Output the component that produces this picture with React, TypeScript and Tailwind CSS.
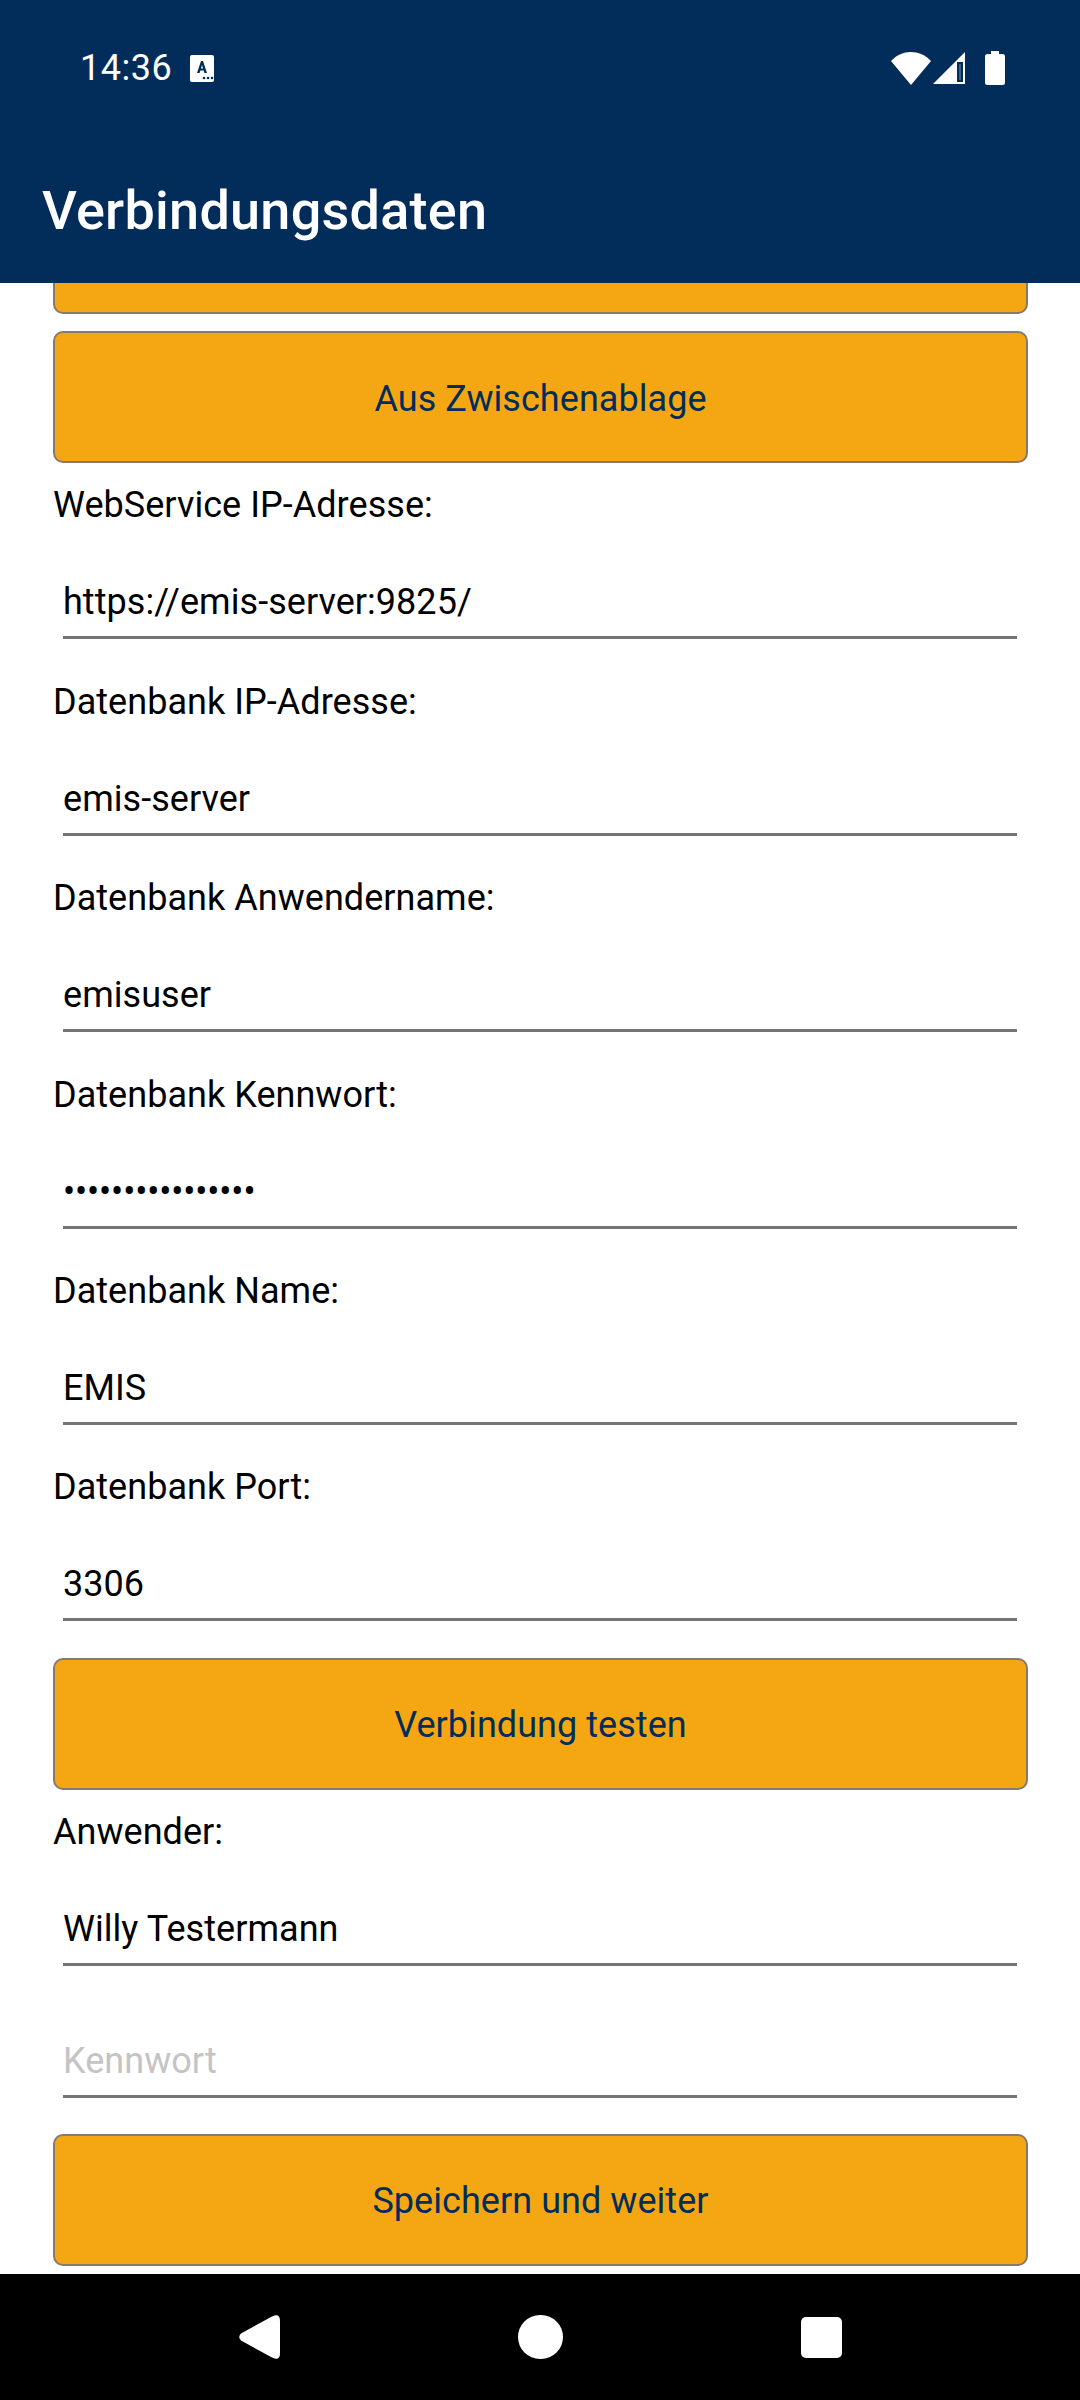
const Btn = ({ t }: { t: string }) => (
  <div className="h-[132px] shrink-0 ml-[53px] mr-[52px] rounded-[10px] border-2 border-[#857a6d] bg-[#f5a713] flex items-center justify-center pt-[3px] text-[36px] tracking-[0.05px] text-[#022d5b]">{t}</div>
);
const Field = ({ label, value, muted, dots }: { label?: string; value: string; muted?: boolean; dots?: boolean }) => (
  <div className="h-[196.4px] shrink-0 flex flex-col justify-end">
    {label && <div className="ml-[53px] h-[48px] leading-[48px] text-[36px] tracking-[0.04px] text-black mb-[37px]">{label}</div>}
    <div className={`mx-[63px] h-[73px] border-b-[3px] border-[#757575] pt-[4px] leading-[64px] text-[36px] ${muted ? "text-[#c4c4c4]" : "text-black"} ${dots ? "tracking-[-0.12px]" : "tracking-[0.04px]"}`}>{value}</div>
  </div>
);
export default function App() {
  return (
    <div className="w-[1080px] h-[2400px] bg-white flex flex-col overflow-hidden font-['Roboto',sans-serif]">
      <header className="h-[283px] shrink-0 bg-[#022d5b] text-white relative z-10">
        <div className="h-[135px] pl-[80px] pr-[75px] flex items-center pt-[1px]">
          <span className="text-[36px] tracking-[0.5px]">14:36</span>
          <svg className="ml-[18px]" width="24" height="27" viewBox="0 0 24 27">
            <rect width="24" height="27" rx="2" fill="#fff" />
            <path d="M7 18 L11 6 h2 L17 18 h-2.6 l-.8-2.6 h-3.2 L9.6 18Z M11 13.4 h2 L12 10Z" fill="#022d5b" fillRule="evenodd" />
            <circle cx="14" cy="23" r="1.3" fill="#022d5b" /><circle cx="18" cy="23" r="1.3" fill="#022d5b" /><circle cx="22" cy="23" r="1.3" fill="#022d5b" />
          </svg>
          <div className="ml-auto flex items-center">
            <svg width="40" height="33" viewBox="0 0 40 33"><path d="M0 9 C 11 -3 29 -3 40 9 L20 33Z" fill="#fff" /></svg>
            <svg className="ml-[2px]" width="33" height="33" viewBox="0 0 33 33"><path fillRule="evenodd" d="M0 32 L32 0 V32Z M24 10 L30 10 V30 H24Z" fill="#fff" /><rect x="26" y="12" width="2" height="16" fill="#fff" opacity="0.25" /></svg>
            <svg className="ml-[19px]" width="20" height="34" viewBox="0 0 20 34"><path d="M6 0 h8 v3 h3.5 a2.5 2.5 0 0 1 2.5 2.5 V31.5 a2.5 2.5 0 0 1 -2.5 2.5 H2.500 a2.500 2.500 0 0 1 -2.500 -2.500 V5.500 a2.500 2.500 0 0 1 2.500 -2.500 H6Z" fill="#fff" /></svg>
          </div>
        </div>
        <div className="pl-[42px] text-[54px] font-medium leading-[56px] mt-[48px] tracking-[0.25px]">Verbindungsdaten</div>
      </header>
      <main className="flex-1 min-h-0 overflow-hidden flex flex-col">
        <div className="-mt-[101px] flex flex-col">
          <Btn t="" />
          <div className="h-[17px] shrink-0" />
          <Btn t="Aus Zwischenablage" />
          <div className="-mt-[20px]" />
          <Field label="WebService IP-Adresse:" value="https://emis-server:9825/" />
          <Field label="Datenbank IP-Adresse:" value="emis-server" />
          <Field label="Datenbank Anwendername:" value="emisuser" />
          <Field label="Datenbank Kennwort:" value="••••••••••••••••" dots />
          <Field label="Datenbank Name:" value="EMIS" />
          <Field label="Datenbank Port:" value="3306" />
          <div className="h-[36.6px] shrink-0" />
          <Btn t="Verbindung testen" />
          <div className="-mt-[20.5px]" />
          <Field label="Anwender:" value="Willy Testermann" />
          <div className="h-[132px] shrink-0 flex flex-col justify-end">
            <Field value="Kennwort" muted />
          </div>
          <div className="h-[36px] shrink-0" />
          <Btn t="Speichern und weiter" />
        </div>
      </main>
      <nav className="h-[126px] shrink-0 bg-black flex items-center justify-center">
        <div className="w-[281px] flex justify-center">
          <svg width="41" height="44" viewBox="0 0 41 44"><path d="M33 1.500 Q41 -2.500 41 6 V38 Q41 46.500 33 42.500 L2 25.500 Q-1.500 22 2 18.500Z" fill="#fff" /></svg>
        </div>
        <div className="w-[281px] flex justify-center">
          <div className="w-[45px] h-[44px] rounded-full bg-white" />
        </div>
        <div className="w-[281px] flex justify-center">
          <div className="w-[41px] h-[41px] rounded-[5px] bg-white" />
        </div>
      </nav>
    </div>
  );
}
